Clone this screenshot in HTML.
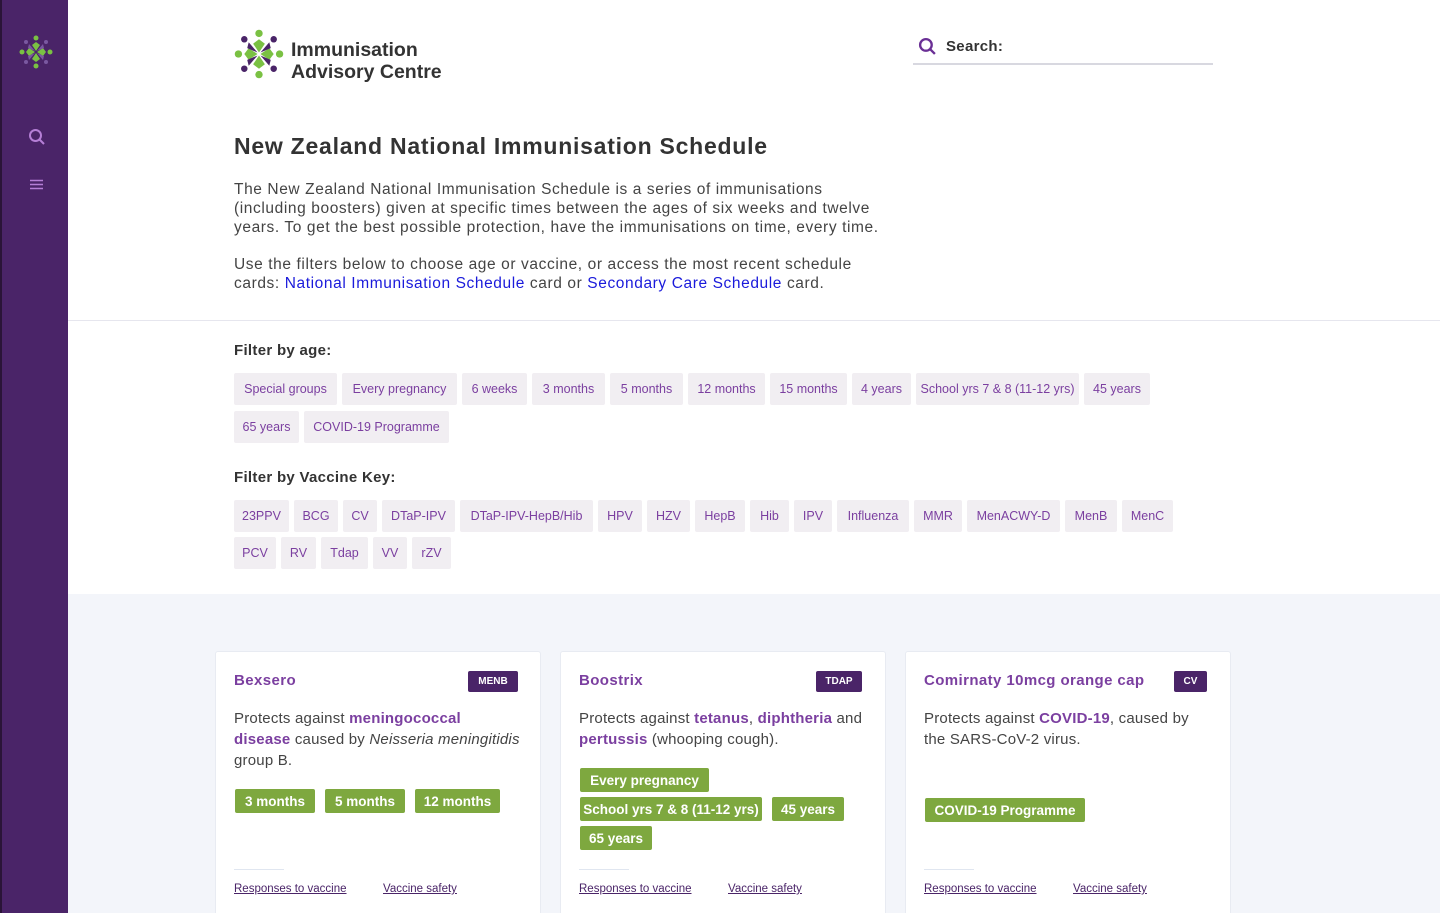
<!DOCTYPE html>
<html><head><meta charset="utf-8"><style>
*{margin:0;padding:0;box-sizing:border-box}
html{width:1440px;height:913px;overflow:hidden}
body{width:1440px;height:913px;overflow:hidden;font-family:"Liberation Sans",sans-serif;background:#fff;position:relative;color:#333}
.side{position:absolute;left:0;top:0;width:68px;height:913px;background:#4a2468;border-left:2px solid #2a1438}
.top{position:absolute;left:68px;top:0;right:0;height:321px;border-bottom:1px solid #e6e6ee}
.filt{position:absolute;left:68px;top:321px;right:0;height:273px;background:#fff}
.cards{position:absolute;left:68px;top:594px;right:0;height:319px;background:#f3f5fa}
.a{position:absolute}
h1{font-size:23px;font-weight:bold;color:#333;letter-spacing:0.75px}
p.t{font-size:15.5px;line-height:19px;color:#444;letter-spacing:0.6px}
a{color:#1a1adb}
.h3{font-size:15px;font-weight:bold;color:#333;letter-spacing:0.3px}
.row{position:absolute;left:234px;display:flex;gap:5px;height:32px}
.row span{display:flex;align-items:center;justify-content:center;background:#f1eef2;color:#7b3fa0;font-size:12.5px;height:32px;border-radius:2px;white-space:nowrap}
.card{position:absolute;top:651px;width:326px;height:262px;background:#fff;border:1px solid #e8ebf2;border-bottom:none;border-radius:3px 3px 0 0;overflow:hidden}
.card .n{position:absolute;left:18px;top:20px;font-size:15px;font-weight:bold;color:#7b3fa0;letter-spacing:0.4px}
.card .k{position:absolute;top:19px;height:21px;background:#4a2468;color:#fff;font-size:10px;font-weight:bold;display:flex;align-items:center;justify-content:center;border-radius:2px}
.card .d{position:absolute;left:18px;top:56px;width:295px;font-size:15px;line-height:21px;color:#444;letter-spacing:0.2px}
.card .d b{color:#7b3fa0}
.g{position:absolute;height:24px;background:#7ea83f;color:#fff;font-size:13.5px;font-weight:bold;display:flex;align-items:center;justify-content:center;border-radius:2px;white-space:nowrap}
.ln{position:absolute;left:18px;top:217px;width:50px;height:1px;background:#e0e6f0}
.lk{position:absolute;top:231px;font-size:11.5px;color:#4a2468;text-decoration:underline}
</style></head><body>
<div class="side">
<svg class="a" style="left:17px;top:35px" width="34" height="34" viewBox="0 0 34 34">
<g fill="#7ac143"><circle cx="17" cy="3" r="2.5"/><circle cx="17" cy="31" r="2.5"/><circle cx="3" cy="17" r="2.5"/><circle cx="31" cy="17" r="2.5"/>
<path d="M17 7 L13 10 L17 16 L21 10Z"/><path d="M17 27 L13 24 L17 18 L21 24Z"/><path d="M7 17 L10 13 L16 17 L10 21Z"/><path d="M27 17 L24 13 L18 17 L24 21Z"/></g>
<g fill="#7a58a0"><circle cx="7" cy="7" r="2"/><circle cx="27" cy="7" r="2"/><circle cx="7" cy="27" r="2"/><circle cx="27" cy="27" r="2"/>
<path d="M10 9 L16 16 L9 13Z"/><path d="M24 9 L18 16 L25 13Z"/><path d="M10 25 L16 18 L9 21Z"/><path d="M24 25 L18 18 L25 21Z"/></g></svg>
<svg class="a" style="left:26px;top:128px" width="18" height="18" viewBox="0 0 18 18" fill="none" stroke="#b57fd6" stroke-width="2"><circle cx="7.5" cy="7.5" r="5.5"/><path d="M11.5 11.5L16 16"/></svg>
<svg class="a" style="left:28px;top:179px" width="13" height="11" viewBox="0 0 13 11" stroke="#b57fd6" stroke-width="1.6"><path d="M0 1.5H13M0 5.5H13M0 9.5H13"/></svg>
</div>
<div class="top"></div><div class="filt"></div><div class="cards"></div>

<svg class="a" style="left:234px;top:29px" width="50" height="50" viewBox="0 0 34 34">
<g fill="#7ac143"><circle cx="17" cy="3" r="2.5"/><circle cx="17" cy="31" r="2.5"/><circle cx="3" cy="17" r="2.5"/><circle cx="31" cy="17" r="2.5"/>
<path d="M17 7 L13 10 L17 16 L21 10Z"/><path d="M17 27 L13 24 L17 18 L21 24Z"/><path d="M7 17 L10 13 L16 17 L10 21Z"/><path d="M27 17 L24 13 L18 17 L24 21Z"/></g>
<g fill="#4a2468"><circle cx="7" cy="7" r="2.2"/><circle cx="27" cy="7" r="2.2"/><circle cx="7" cy="27" r="2.2"/><circle cx="27" cy="27" r="2.2"/>
<path d="M10 9 L16 16 L9 13Z"/><path d="M24 9 L18 16 L25 13Z"/><path d="M10 25 L16 18 L9 21Z"/><path d="M24 25 L18 18 L25 21Z"/></g></svg>
<div class="a" style="left:291px;top:39px;font-size:19.5px;line-height:22px;font-weight:bold;color:#333">Immunisation<br>Advisory Centre</div>

<svg class="a" style="left:918px;top:37px" width="19" height="19" viewBox="0 0 18 18" fill="none" stroke="#6a2f95" stroke-width="2.2"><circle cx="7.5" cy="7.5" r="5.5"/><path d="M11.5 11.5L16 16"/></svg>
<div class="a" style="left:946px;top:38px;font-size:15px;font-weight:bold;color:#333;letter-spacing:0.3px">Search:</div>
<div class="a" style="left:913px;top:63px;width:300px;height:2px;background:#d8d8e0"></div>

<h1 class="a" style="left:234px;top:133px">New Zealand National Immunisation Schedule</h1>
<p class="t a" style="left:234px;top:180px;width:660px">The New Zealand National Immunisation Schedule is a series of immunisations (including boosters) given at specific times between the ages of six weeks and twelve years. To get the best possible protection, have the immunisations on time, every time.</p>
<p class="t a" style="left:234px;top:255px;width:640px">Use the filters below to choose age or vaccine, or access the most recent schedule cards: <a>National Immunisation Schedule</a> card or <a>Secondary Care Schedule</a> card.</p>

<div class="h3 a" style="left:234px;top:342px">Filter by age:</div>
<div class="row" style="top:373px"><span style="width:103px">Special groups</span><span style="width:115px">Every pregnancy</span><span style="width:65px">6 weeks</span><span style="width:73px">3 months</span><span style="width:73px">5 months</span><span style="width:77px">12 months</span><span style="width:77px">15 months</span><span style="width:59px">4 years</span><span style="width:163px">School yrs 7 &amp; 8 (11-12 yrs)</span><span style="width:66px">45 years</span></div>
<div class="row" style="top:411px"><span style="width:65px">65 years</span><span style="width:145px">COVID-19 Programme</span></div>
<div class="h3 a" style="left:234px;top:469px">Filter by Vaccine Key:</div>
<div class="row" style="top:500px"><span style="width:55px">23PPV</span><span style="width:44px">BCG</span><span style="width:34px">CV</span><span style="width:73px">DTaP-IPV</span><span style="width:133px">DTaP-IPV-HepB/Hib</span><span style="width:44px">HPV</span><span style="width:43px">HZV</span><span style="width:50px">HepB</span><span style="width:39px">Hib</span><span style="width:38px">IPV</span><span style="width:72px">Influenza</span><span style="width:48px">MMR</span><span style="width:93px">MenACWY-D</span><span style="width:52px">MenB</span><span style="width:51px">MenC</span></div>
<div class="row" style="top:537px"><span style="width:42px">PCV</span><span style="width:35px">RV</span><span style="width:47px">Tdap</span><span style="width:34px">VV</span><span style="width:39px">rZV</span></div>

<div class="card" style="left:215px">
<div class="n">Bexsero</div><div class="k" style="left:252px;width:50px">MENB</div>
<div class="d">Protects against <b>meningococcal<br>disease</b> caused by <i>Neisseria meningitidis</i> group B.</div>
<div class="g" style="left:19px;top:137px;width:80px">3 months</div><div class="g" style="left:109px;top:137px;width:80px">5 months</div><div class="g" style="left:199px;top:137px;width:85px">12 months</div>
<div class="ln"></div><div class="lk" style="left:18px">Responses to vaccine</div><div class="lk" style="left:167px">Vaccine safety</div></div>

<div class="card" style="left:560px">
<div class="n">Boostrix</div><div class="k" style="left:255px;width:46px">TDAP</div>
<div class="d">Protects against <b>tetanus</b>, <b>diphtheria</b> and <b>pertussis</b> (whooping cough).</div>
<div class="g" style="left:19px;top:116px;width:129px">Every pregnancy</div>
<div class="g" style="left:19px;top:145px;width:182px">School yrs 7 &amp; 8 (11-12 yrs)</div><div class="g" style="left:211px;top:145px;width:72px">45 years</div>
<div class="g" style="left:19px;top:174px;width:72px">65 years</div>
<div class="ln"></div><div class="lk" style="left:18px">Responses to vaccine</div><div class="lk" style="left:167px">Vaccine safety</div></div>

<div class="card" style="left:905px">
<div class="n">Comirnaty 10mcg orange cap</div><div class="k" style="left:268px;width:33px">CV</div>
<div class="d">Protects against <b>COVID-19</b>, caused by<br>the SARS-CoV-2 virus.</div>
<div class="g" style="left:19px;top:146px;width:160px">COVID-19 Programme</div>
<div class="ln"></div><div class="lk" style="left:18px">Responses to vaccine</div><div class="lk" style="left:167px">Vaccine safety</div></div>
</body></html>
